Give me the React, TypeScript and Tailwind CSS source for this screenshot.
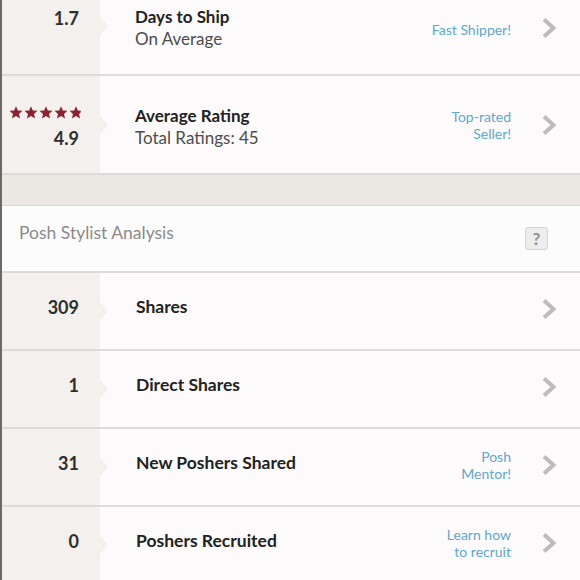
import React from "react";

const font = { fontFamily: "Lato, 'Open Sans', sans-serif" };

function Chevron() {
  return (
    <svg width="16" height="22" viewBox="0 0 16 22" className="shrink-0">
      <polyline points="3,2.5 12.5,11 3,19.5" fill="none" stroke="#bdbcbc" strokeWidth="4" strokeLinejoin="miter" />
    </svg>
  );
}

function Star({ clip }: { clip?: number }) {
  const id = clip ? "clipStar" : undefined;
  return (
    <svg width="14" height="13" viewBox="0 0 24 23">
      {clip ? (
        <defs>
          <clipPath id="clipStar">
            <rect x="0" y="0" width={24 * clip} height="23" />
          </clipPath>
        </defs>
      ) : null}
      <polygon
        points="12,0.5 15.3,8 23.5,8.6 17.3,14 19.2,22.2 12,17.8 4.8,22.2 6.7,14 0.5,8.6 8.7,8"
        fill="#8a2433"
        clipPath={id ? `url(#${id})` : undefined}
      />
    </svg>
  );
}

function Notch() {
  return (
    <div className="absolute right-[-8px] top-1/2 -translate-y-1/2 w-0 h-0 border-y-[9px] border-y-transparent border-l-[8px] border-l-[#f3f0ed]" />
  );
}

function Row({
  left,
  leftClass,
  children,
  right,
  rightClass,
  h,
}: {
  left: React.ReactNode;
  leftClass?: string;
  children: React.ReactNode;
  right?: React.ReactNode;
  rightClass?: string;
  h: string;
}) {
  return (
    <div className={`flex border-b-2 border-[#dddbd9] ${h}`}>
      <div className={`relative w-[98px] shrink-0 bg-[#f3f0ed] flex flex-col items-end pr-[21px] ${leftClass ?? "justify-center"}`}>
        {left}
        <Notch />
      </div>
      <div className={`flex-1 flex items-center pl-[35px] pr-[23px] ${rightClass ?? ""}`}>
        <div className="flex-1">{children}</div>
        {right ? (
          <div className="text-right text-[14px] leading-[17px] text-[#5fa7cc] mr-[30px]">{right}</div>
        ) : null}
        <Chevron />
      </div>
    </div>
  );
}

export default function App() {
  return (
    <div className="w-[580px] h-[580px] overflow-hidden bg-[#fcfafa]" style={font}>
      <div className="border-l-2 border-[#6d6866] mt-[-23px]">
        <Row
          h="h-[99px]"
          leftClass="justify-center pb-[14px]"
          rightClass="pt-[5px]"
          left={<div className="text-[18px] font-bold text-[#2e2e2e]">1.7</div>}
          right={<div className="pt-[2px]">Fast Shipper!</div>}
        >
          <div className="text-[17px] font-bold text-[#222] leading-[22px]">Days to Ship</div>
          <div className="text-[17px] text-[#4d4d4d] leading-[22px]">On Average</div>
        </Row>
        <Row
          h="h-[99px]"
          leftClass="justify-center pr-[20px] pt-[9px]"
          left={
            <div className="flex flex-col items-end mr-[-2px]">
              <div className="flex gap-[1px] mr-[-2px]">
                <Star />
                <Star />
                <Star />
                <Star />
                <Star clip={0.85} />
              </div>
              <div className="text-[18px] font-bold text-[#2e2e2e] mt-[6px] mr-[2px]">4.9</div>
            </div>
          }
          right={
            <>
              <div>Top-rated</div>
              <div>Seller!</div>
            </>
          }
        >
          <div className="text-[17px] font-bold text-[#222] leading-[22px] pt-[4px]">Average Rating</div>
          <div className="text-[17px] text-[#4d4d4d] leading-[22px]">Total Ratings: 45</div>
        </Row>
        <div className="h-[31px] bg-[#ebe8e4] border-b border-[#dcd9d5]" />
        <div className="h-[67px] flex items-center justify-between pl-[17px] pr-[32px] border-b-2 border-[#dddbd9] bg-[#fdfcfc]">
          <div className="text-[17.5px] text-[#8a8a8a] pb-[10px]">Posh Stylist Analysis</div>
          <div className="w-[23px] h-[23px] rounded-[3px] border border-[#d3d3d3] bg-[#ededed] flex items-center justify-center text-[17px] font-bold text-[#8e8e8e] leading-none">
            ?
          </div>
        </div>
        {[
          { n: "309", t: "Shares" },
          { n: "1", t: "Direct Shares" },
          { n: "31", t: "New Poshers Shared", r: ["Posh", "Mentor!"] },
          { n: "0", t: "Poshers Recruited", r: ["Learn how", "to recruit"] },
        ].map((row) => (
          <Row
            key={row.t}
            h="h-[78px]"
            leftClass="justify-center pb-[8px]"
            rightClass="pb-[5px]"
            left={<div className="text-[18px] font-bold text-[#2e2e2e]">{row.n}</div>}
            right={
              row.r ? (
                <>
                  <div>{row.r[0]}</div>
                  <div>{row.r[1]}</div>
                </>
              ) : undefined
            }
          >
            <div className="text-[17.5px] font-bold text-[#222] pb-[3px] ml-[1px]">{row.t}</div>
          </Row>
        ))}
      </div>
    </div>
  );
}
